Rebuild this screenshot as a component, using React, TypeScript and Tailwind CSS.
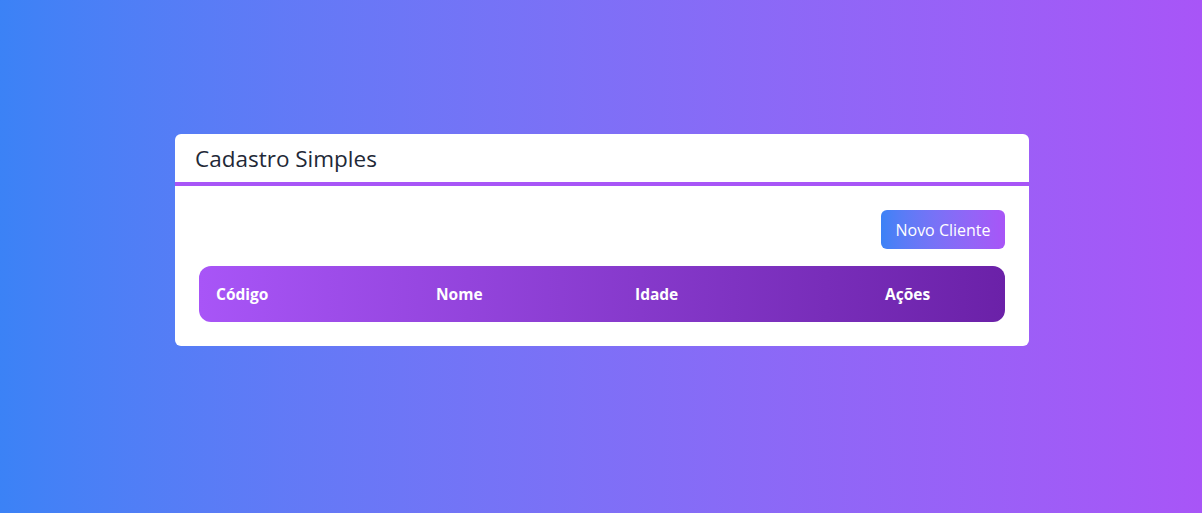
export default function App() {
  const columns = ["Código", "Nome", "Idade", "Ações"];

  return (
    <div
      className="min-h-screen w-full bg-gradient-to-r from-[#3b82f6] to-[#a855f7] flex justify-center items-start pt-[134px] pl-[2px]"
      style={{ fontFamily: '"Segoe UI", "Open Sans", "Noto Sans", sans-serif' }}
    >
      <div className="w-[854px] bg-white rounded-md overflow-hidden">
        <div className="h-[45px] flex items-center px-5 pt-[3px] border-b-4 border-[#a855f7] box-content">
          <h1 className="text-[22.5px] text-[#1f2937] leading-none">Cadastro Simples</h1>
        </div>

        <div className="p-6">
          <div className="flex justify-end mb-[17px]">
            <button className="h-[39px] w-[124px] rounded-md text-white text-[16px] bg-gradient-to-r from-[#3b82f6] to-[#a855f7]">
              Novo Cliente
            </button>
          </div>

          <div className="grid grid-cols-[220px_199px_250px_1fr] h-[56px] items-center pt-[2px] rounded-xl bg-gradient-to-r from-[#a855f7] to-[#6b21a8] text-white font-bold text-[15.5px]">
            {columns.map((c) => (
              <div key={c} className="px-[17px]">
                {c}
              </div>
            ))}
          </div>
        </div>
      </div>
    </div>
  );
}
